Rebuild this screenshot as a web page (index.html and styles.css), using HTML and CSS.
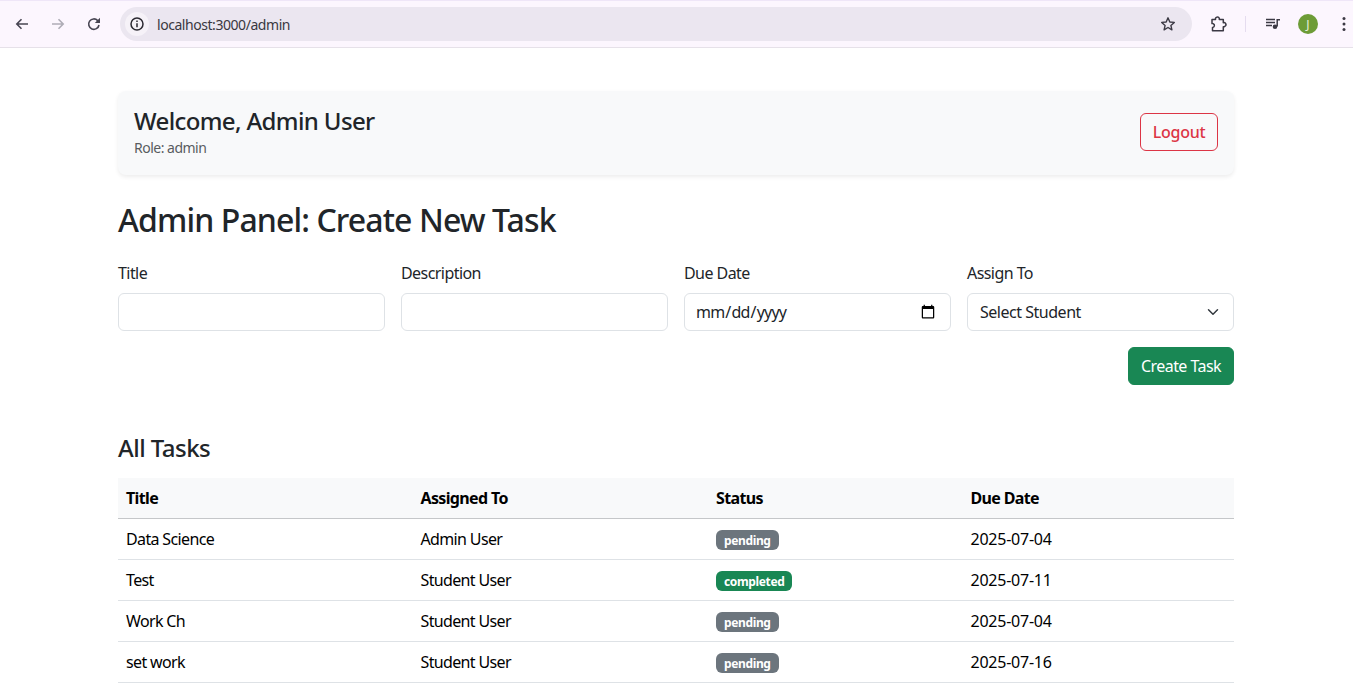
FILE: index.html
```html
<!DOCTYPE html>
<html lang="en">
<head>
<meta charset="utf-8">
<title>Admin</title>
<link rel="stylesheet" href="styles.css">
</head>
<body>
<header class="chrome">
  <button class="nav-btn" aria-label="Back"><svg viewBox="0 0 16 16" class="ico"><path d="M14 8H3M7.5 3.2 2.8 8l4.7 4.8" fill="none" stroke="#474552" stroke-width="1.6"/></svg></button>
  <button class="nav-btn dim" aria-label="Forward"><svg viewBox="0 0 16 16" class="ico"><path d="M2 8h11M8.5 3.2 13.2 8l-4.7 4.8" fill="none" stroke="#aeacb6" stroke-width="1.6"/></svg></button>
  <button class="nav-btn" aria-label="Reload"><svg viewBox="0 0 16 16" class="ico"><path d="M13 9a5.2 5.2 0 1 1-1.3-4.4L13.4 6.2" fill="none" stroke="#474552" stroke-width="1.6"/><path d="M14 1.8V7H8.8z" fill="#474552"/></svg></button>
  <div class="omnibox">
    <span class="site-info"><svg viewBox="0 0 16 16" width="16" height="16"><circle cx="8" cy="8" r="6" fill="none" stroke="#2b2931" stroke-width="1.5"/><path d="M8 7.2v4M8 4.6v1.5" stroke="#2b2931" stroke-width="1.5"/></svg></span>
    <span class="url">localhost:3000/admin</span>
    <svg class="star" viewBox="0 0 16 16" width="16" height="16"><path d="M8 1.8 9.8 6l4.5.4-3.4 3 1 4.4L8 11.5l-3.9 2.3 1-4.4-3.4-3L6.200 6z" fill="none" stroke="#3b3944" stroke-width="1.4" stroke-linejoin="round"/></svg>
  </div>
  <svg class="ext" viewBox="0 0 18 18" width="18" height="18"><path d="M2 4.500h3.500a2 2 0 0 1 3.800-1.200V4.500h4v3.200a2 2 0 0 1 1.500 3.700 2 2 0 0 1-1.500.4v4H2.500v-3.300a2 2 0 0 0 .8-3.800 2 2 0 0 0-1.300-.2z" fill="none" stroke="#3b3944" stroke-width="1.500" stroke-linejoin="round"/></svg>
  <span class="sep"></span>
  <svg class="media" viewBox="0 0 16 16" width="16" height="16"><path d="M1 3.500h9M1 6.500h9M1 9.500h6" stroke="#3b3944" stroke-width="1.300"/><path d="M12.200 3v7.500" stroke="#3b3944" stroke-width="1.500"/><path d="M12 3h3v1.500h-3z" fill="#3b3944"/><circle cx="10" cy="10.800" r="2.300" fill="#3b3944"/></svg>
  <span class="avatar">J</span>
  <svg class="kebab" viewBox="0 0 4 16" width="4" height="16"><circle cx="2" cy="2.500" r="1.500" fill="#3b3944"/><circle cx="2" cy="8" r="1.500" fill="#3b3944"/><circle cx="2" cy="13.500" r="1.500" fill="#3b3944"/></svg>
</header>

<main class="container">
  <section class="welcome">
    <div>
      <h4 class="welcome-title">Welcome, Admin User</h4>
      <p class="role">Role: admin</p>
    </div>
    <button class="btn btn-logout">Logout</button>
  </section>

  <h1 class="panel-title">Admin Panel: Create New Task</h1>

  <form class="task-form">
    <div class="field"><label class="label">Title</label><input class="control" type="text"></div>
    <div class="field"><label class="label">Description</label><input class="control" type="text"></div>
    <div class="field"><label class="label">Due Date</label><input class="control date-input" type="date"></div>
    <div class="field"><label class="label">Assign To</label><select class="control select"><option>Select Student</option></select></div>
  </form>
  <div class="actions"><button class="btn btn-create">Create Task</button></div>

  <h2 class="tasks-title">All Tasks</h2>
  <table class="tasks">
    <thead>
      <tr><th class="c1">Title</th><th class="c2">Assigned To</th><th class="c3">Status</th><th>Due Date</th></tr>
    </thead>
    <tbody>
      <tr><td>Data Science</td><td>Admin User</td><td><span class="badge pending">pending</span></td><td class="date">2025-07-04</td></tr>
      <tr><td>Test</td><td>Student User</td><td><span class="badge done">completed</span></td><td class="date">2025-07-11</td></tr>
      <tr><td>Work Ch</td><td>Student User</td><td><span class="badge pending">pending</span></td><td class="date">2025-07-04</td></tr>
      <tr><td>set work</td><td>Student User</td><td><span class="badge pending">pending</span></td><td class="date">2025-07-16</td></tr>
    </tbody>
  </table>
</main>
</body>
</html>
```

FILE: styles.css
```css
* { box-sizing: border-box; }
html, body { margin: 0; height: 693px; overflow: hidden; background: #fff; }
body { font-family: "Noto Sans", "Open Sans", sans-serif; font-size: 16px; color: #212529; }

.chrome { height: 48px; background: #fcf6fe; border-top: 1px solid #efe6f8; border-bottom: 1px solid #e6e1e9; display: flex; align-items: center; padding: 0 0 0 4px; }
.nav-btn { width: 36px; height: 36px; border: 0; background: none; padding: 0; display: flex; align-items: center; justify-content: center; }
.ico { width: 16px; height: 16px; }
.omnibox { margin-left: 8px; width: 1072px; height: 34px; border-radius: 17px; background: #ebe6f0; display: flex; align-items: center; padding: 0 16px 0 2px; }
.site-info { width: 24px; height: 24px; border-radius: 50%; background: #f6f2f8; display: flex; align-items: center; justify-content: center; margin-left: 3px; }
.url { margin-left: 8px; font-size: 14px; letter-spacing: -.032em; color: #3a3841; flex: 1; }
.ext { margin-left: 18px; }
.sep { width: 1px; height: 16px; background: #e5dcef; margin-left: 17px; }
.media { margin-left: 19px; }
.avatar { width: 20px; height: 20px; border-radius: 50%; background: #6d9c37; color: #e8f0dc; font-size: 12px; display: flex; align-items: center; justify-content: center; margin-left: 17px; }
.kebab { margin-left: 24px; }

.container { width: 1116px; margin: 0 0 0 118px; padding-top: 43px; }
.welcome { height: 84px; background: #f8f9fa; border-radius: 8px; box-shadow: 0 2px 4px rgba(0,0,0,.075); padding: 0 16px 2px; display: flex; align-items: center; justify-content: space-between; }
.welcome-title { margin: 0 0 2px; font-size: 24px; font-weight: 550; line-height: 29px; letter-spacing: -.026em; }
.role { margin: 0; font-size: 14px; line-height: 21px; letter-spacing: -.036em; color: #595c5f; }
.btn { height: 38px; border-radius: 6px; font: inherit; padding: 0; white-space: nowrap; }
.btn-logout { width: 78px; background: transparent; border: 1px solid #dc3545; color: #dc3545; font-weight: 550; letter-spacing: -.015em; }
.panel-title { margin: 24px 0 0; font-size: 32px; font-weight: 500; line-height: 42px; letter-spacing: -.028em; }
.task-form { margin-top: 20px; display: grid; grid-template-columns: repeat(4, 1fr); gap: 16px; }
.field { display: flex; flex-direction: column; }
.label { line-height: 24px; margin-bottom: 8px; letter-spacing: -.035em; }
.control { height: 38px; width: 100%; border: 1px solid #dee2e6; border-radius: 6px; padding: 0 12px; font: inherit; letter-spacing: -.03em; color: #212529; background-color: #fff; }
.date-input { padding-left: 10px; letter-spacing: -.05em; }
.select { appearance: none; background-image: url("data:image/svg+xml,%3csvg xmlns='http://www.w3.org/2000/svg' viewBox='0 0 16 16'%3e%3cpath fill='none' stroke='%23343a40' stroke-linecap='round' stroke-linejoin='round' stroke-width='2' d='m2 5 6 6 6-6'/%3e%3c/svg%3e"); background-repeat: no-repeat; background-position: right 12px center; background-size: 16px 12px; }
.actions { margin-top: 16px; display: flex; justify-content: flex-end; }
.btn-create { background: #198754; border: 1px solid #198754; color: #fff; width: 106px; letter-spacing: -.035em; }
.tasks-title { margin: 48px 0 0; font-size: 24px; font-weight: 500; line-height: 29px; letter-spacing: -.022em; }
.tasks { margin-top: 16px; width: 100%; border-collapse: collapse; table-layout: fixed; letter-spacing: -.04em; }
th { background: #f8f9fa; color: #000; font-weight: 700; text-align: left; height: 40px; padding: 0 8px; border-bottom: 1px solid #c5c7c9; }
td { color: #000; height: 41px; padding: 0 8px; border-bottom: 1px solid #dee2e6; }
.date { letter-spacing: -.015em; }
.c1 { width: 294.5px; }
.c2 { width: 295.5px; }
.c3 { width: 254.500px; }
.badge { display: inline-block; font-size: 12px; font-weight: 700; color: #fff; line-height: 12px; padding: 5px 8px 3px; border-radius: 6px; vertical-align: middle; letter-spacing: -.03em; }
.pending { background: #6c757d; }
.done { background: #198754; }
```
